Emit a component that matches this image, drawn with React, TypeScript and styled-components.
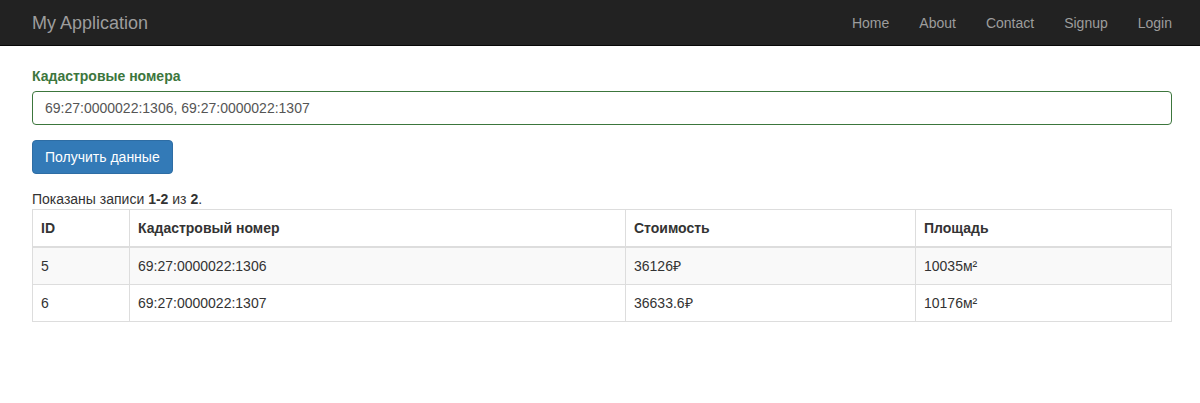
import styled, { createGlobalStyle } from "styled-components";

interface IRecord {
  id: number;
  number: string;
  cost: string;
  area: string;
}

const records: IRecord[] = [
  { id: 5, number: "69:27:0000022:1306", cost: "36126₽", area: "10035м²" },
  { id: 6, number: "69:27:0000022:1307", cost: "36633.6₽", area: "10176м²" },
];

const links = ["Home", "About", "Contact", "Signup", "Login"];

const GlobalStyle = createGlobalStyle`
  html, body {
    margin: 0;
    padding: 0;
    background: #fff;
  }
  body {
    font-family: "Liberation Sans", Arial, sans-serif;
    font-size: 14px;
    line-height: 20px;
    color: #333;
  }
  * {
    box-sizing: border-box;
  }
`;

export default function App() {
  return (
    <>
      <GlobalStyle />
      <Navbar>
        <NavInner>
          <Brand>My Application</Brand>
          <NavList>
            {links.map((link) => (
              <NavItem key={link}>{link}</NavItem>
            ))}
          </NavList>
        </NavInner>
      </Navbar>
      <Container>
        <FormGroup>
          <Label>Кадастровые номера</Label>
          <Input defaultValue="69:27:0000022:1306, 69:27:0000022:1307" />
        </FormGroup>
        <FormGroup>
          <Button>Получить данные</Button>
        </FormGroup>
        <Summary>
          Показаны записи <b>1-2</b> из <b>2</b>.
        </Summary>
        <Table>
          <thead>
            <tr>
              <Th $width={97}>ID</Th>
              <Th $width={496}>Кадастровый номер</Th>
              <Th $width={290}>Стоимость</Th>
              <Th>Площадь</Th>
            </tr>
          </thead>
          <tbody>
            {records.map((item) => (
              <Row key={item.id}>
                <Td>{item.id}</Td>
                <Td>{item.number}</Td>
                <Td>{item.cost}</Td>
                <Td>{item.area}</Td>
              </Row>
            ))}
          </tbody>
        </Table>
      </Container>
    </>
  );
}

const Navbar = styled.nav`
  height: 46px;
  background-color: #222;
  border-bottom: 1px solid #080808;
`;

const NavInner = styled.div`
  width: 1140px;
  margin-left: 32px;
  height: 45px;
  display: flex;
  align-items: center;
  justify-content: space-between;
`;

const Brand = styled.a`
  font-size: 18px;
  line-height: 20px;
  color: #9d9d9d;
  cursor: pointer;
`;

const NavList = styled.ul`
  display: flex;
  list-style: none;
  margin: 0 -15px 0 0;
  padding: 0;
`;

const NavItem = styled.li`
  padding: 0 15px;
  font-size: 14px;
  line-height: 20px;
  color: #9d9d9d;
  cursor: pointer;
`;

const Container = styled.div`
  width: 1140px;
  margin-left: 32px;
  padding-top: 20px;
`;

const FormGroup = styled.div`
  margin-bottom: 15px;
`;

const Label = styled.label`
  display: block;
  font-weight: 700;
  color: #3c763d;
  margin-bottom: 5px;
`;

const Input = styled.input`
  display: block;
  width: 100%;
  height: 34px;
  padding: 6px 12px;
  font-family: "Liberation Sans", Arial, sans-serif;
  font-size: 14px;
  color: #555;
  border: 1px solid #3c763d;
  border-radius: 4px;
  outline: none;
`;

const Button = styled.button`
  height: 34px;
  padding: 6px 12px;
  font-family: "Liberation Sans", Arial, sans-serif;
  font-size: 14px;
  line-height: 20px;
  color: #fff;
  background-color: #337ab7;
  border: 1px solid #2e6da4;
  border-radius: 4px;
  cursor: pointer;
`;

const Summary = styled.div`
  line-height: 20px;
`;

const Table = styled.table`
  width: 100%;
  border-collapse: collapse;
  border: 1px solid #ddd;
`;

const Th = styled.th<{ $width?: number }>`
  width: ${(p) => (p.$width ? `${p.$width}px` : "auto")};
  padding: 8px;
  text-align: left;
  font-weight: 700;
  border: 1px solid #ddd;
  border-bottom: 2px solid #ddd;
`;

const Row = styled.tr`
  &:nth-child(odd) {
    background-color: #f9f9f9;
  }
`;

const Td = styled.td`
  padding: 8px;
  border: 1px solid #ddd;
`;
